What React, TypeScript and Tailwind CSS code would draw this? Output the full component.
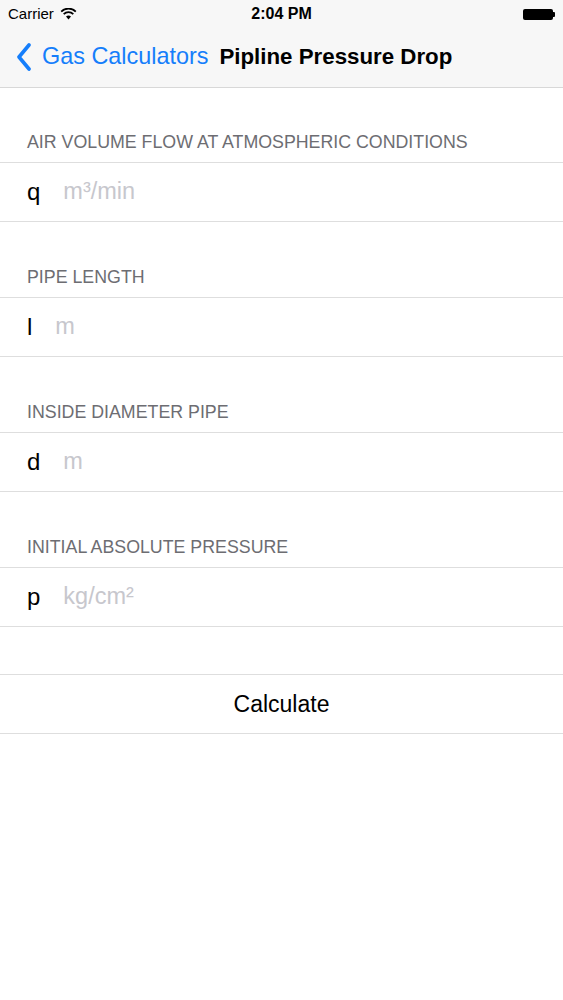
import React from 'react';

const fields = [
  { header: 'AIR VOLUME FLOW AT ATMOSPHERIC CONDITIONS', label: 'q', unit: 'm³/min' },
  { header: 'PIPE LENGTH', label: 'l', unit: 'm' },
  { header: 'INSIDE DIAMETER PIPE', label: 'd', unit: 'm' },
  { header: 'INITIAL ABSOLUTE PRESSURE', label: 'p', unit: 'kg/cm²' },
];

const font = { fontFamily: '"Liberation Sans", Arial, sans-serif' };

export default function App() {
  return (
    <div className="w-[563px] h-[1000px] bg-white text-black overflow-hidden" style={font}>
      {/* status + nav bar */}
      <div className="bg-[#f7f7f7] border-b border-[#d8d8d8] h-[88px] flex flex-col">
        <div className="h-[28px] flex items-center justify-between px-[8px] relative">
          <div className="flex items-center gap-[6px] text-[15px]">
            <span>Carrier</span>
            <svg width="17" height="12" viewBox="0 0 17 12">
              <path d="M8.5 11.5 L6 8.6 A3.6 3.6 0 0 1 11 8.6 Z" fill="#000" />
              <path d="M3.7 6.2 A6.8 6.8 0 0 1 13.3 6.2" stroke="#000" strokeWidth="1.8" fill="none" />
              <path d="M1.2 3.6 A10.4 10.4 0 0 1 15.8 3.6" stroke="#000" strokeWidth="1.8" fill="none" />
            </svg>
          </div>
          <span className="absolute left-0 right-0 text-center text-[16px] font-bold pointer-events-none">2:04 PM</span>
          <div className="flex items-center">
            <div className="w-[30px] h-[11px] bg-black rounded-[2px]" />
            <div className="w-[2px] h-[5px] bg-black rounded-r-[1px]" />
          </div>
        </div>
        <div className="flex-1 flex items-center pl-[16px] pb-[1px]">
          <svg width="16" height="28" viewBox="0 0 16 28" className="mr-[10px]">
            <path d="M13 2 L3 14 L13 26" stroke="#157efb" strokeWidth="3.6" fill="none" strokeLinecap="round" strokeLinejoin="round" />
          </svg>
          <span className="text-[23.4px] text-[#157efb]">Gas Calculators</span>
          <span className="text-[22.3px] font-bold ml-[11px]">Pipline Pressure Drop</span>
        </div>
      </div>

      {fields.map((f, i) => (
        <div key={i}>
          <div className={`${i === 0 ? 'h-[74px]' : 'h-[75px]'} flex items-end pb-[10px] pl-[27px]`}>
            <span className="text-[17.8px] leading-[20px] text-[#6d6d72]">{f.header}</span>
          </div>
          <div className="h-[60px] border-t border-b border-[#dedede] flex items-center pl-[27px]">
            <span className="text-[24px]">{f.label}</span>
            <span className="text-[23.5px] text-[#c7c7cd] ml-[23px]">{f.unit}</span>
          </div>
        </div>
      ))}

      <div className="h-[47px]" />
      <div className="h-[60px] border-t border-b border-[#dedede] flex items-center justify-center">
        <span className="text-[23px]">Calculate</span>
      </div>
    </div>
  );
}
